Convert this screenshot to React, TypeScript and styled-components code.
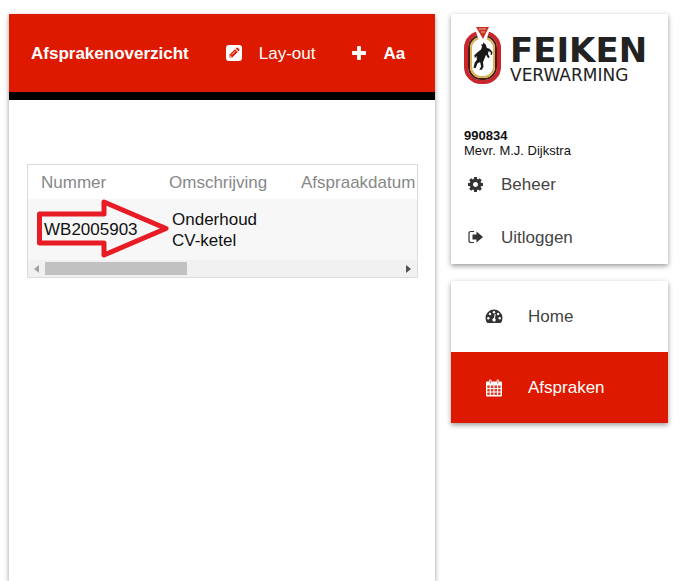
import React, { useRef, useState } from "react";
import styled, { createGlobalStyle, css } from "styled-components";

const RED = "#dd1900";

const GlobalStyle = createGlobalStyle`
  *, *::before, *::after { box-sizing: border-box; }
  body {
    margin: 0;
    background: #fff;
    font-family: "Liberation Sans", Arial, sans-serif;
    font-size: 17px;
    line-height: 21px;
    color: #111;
  }
`;

const Page = styled.div`
  display: grid;
  grid-template-columns: minmax(0, 1fr) 217px;
  gap: 16px;
  min-height: 100vh;
  padding: 14px 12px 0 9px;
`;

const cardShadow = css`
  background: #fff;
  box-shadow: 0 2px 5px rgba(0, 0, 0, 0.4);
`;

const Main = styled.main`
  ${cardShadow}
`;

const Toolbar = styled.header`
  display: flex;
  align-items: center;
  gap: 37px;
  min-height: 86px;
  padding: 0 22px;
  background: ${RED};
  border-bottom: 8px solid #000;
  color: #fff;
`;

const Title = styled.h1`
  margin: 0;
  font-size: 17px;
  line-height: 21px;
`;

const ToolButton = styled.button<{ $strong?: boolean }>`
  display: flex;
  align-items: center;
  gap: 17px;
  padding: 0;
  border: 0;
  background: none;
  color: inherit;
  font: inherit;
  font-weight: ${(p) => (p.$strong ? 700 : 400)};
  white-space: nowrap;
  cursor: pointer;
`;

const TableBox = styled.section`
  position: relative;
  margin: 64px 17px 0 18px;
  border: 1px solid #dcdcdc;
`;

const Scroller = styled.div`
  overflow-x: auto;
  scrollbar-width: none;
`;

const Table = styled.table`
  width: 972px;
  table-layout: fixed;
  border-collapse: collapse;
  text-align: left;
`;

const HeadCell = styled.th<{ $width?: number }>`
  width: ${(p) => (p.$width ? `${p.$width}px` : "auto")};
  height: 34px;
  padding: 0 0 0 13px;
  font-weight: 400;
  color: #888;
`;

const Cell = styled.td`
  height: 61px;
  padding: 0 16px;
  background: #f7f7f7;
`;

const ScrollBar = styled.div`
  display: flex;
  height: 17px;
  background: #f1f1f1;
`;

const ScrollButton = styled.button`
  display: grid;
  place-items: center;
  width: 17px;
  padding: 0;
  border: 0;
  background: none;
  color: #505050;

  &:disabled {
    color: #a3a3a3;
  }
`;

const Track = styled.div`
  flex: 1;
  padding: 2px 0;
`;

const Thumb = styled.div`
  width: 40%;
  height: 13px;
  background: #c1c1c1;
`;

const Pointer = styled.svg`
  position: absolute;
  left: 8px;
  top: 32px;
  pointer-events: none;
`;

const Sidebar = styled.aside`
  display: flex;
  flex-direction: column;
  gap: 17px;
`;

const Card = styled.section`
  ${cardShadow}
`;

const Brand = styled.div`
  display: flex;
  gap: 8px;
  padding: 12px 12px 0 13px;
  margin-bottom: 42px;
  font-family: "DejaVu Sans", sans-serif;
  color: #222;
`;

const BrandText = styled.div`
  display: flex;
  flex-direction: column;
  padding-top: 8px;
`;

const BrandName = styled.strong`
  font-size: 34px;
  line-height: 32px;
`;

const BrandSub = styled.span`
  font-size: 17px;
  line-height: 19px;
`;

const Customer = styled.p`
  display: flex;
  flex-direction: column;
  margin: 0;
  padding: 0 13px;
  font-size: 13px;
  line-height: 15px;
`;

const AccountLink = styled.a`
  display: flex;
  align-items: center;
  gap: 18px;
  height: 53px;
  padding: 0 17px;
  color: #444;
  text-decoration: none;
`;

const NavLink = styled.a<{ $active?: boolean }>`
  display: flex;
  align-items: center;
  gap: 25px;
  height: 71px;
  padding: 0 34px;
  background: ${(p) => (p.$active ? RED : "#fff")};
  color: ${(p) => (p.$active ? "#fff" : "#444")};
  text-decoration: none;
`;

const DarkIcon = styled.svg`
  color: #333;
`;

const EditIcon = () => (
  <svg width="16" height="16" viewBox="0 0 16 16" aria-hidden="true">
    <rect width="16" height="16" rx="3" fill="#fff" />
    <path d="M3.400 12.600V9.800L9 4.200l2.800 2.800-5.600 5.600zM9.700 3.500l.8-.8q.6-.5 1.200 0l1.600 1.600q.5.600 0 1.200l-.8.800z" fill={RED} />
    <path d="M5.600 9.800l3.600-3.600M4.200 10.400v1.400h1.400" stroke="#fff" strokeWidth=".8" fill="none" />
  </svg>
);

const PlusIcon = () => (
  <svg width="14" height="14" viewBox="192 128 1408 1408" aria-hidden="true">
    <path
      fill="currentColor"
      d="M1600 736v192q0 40-28 68t-68 28h-416v416q0 40-28 68t-68 28h-192q-40 0-68-28t-28-68v-416h-416q-40 0-68-28t-28-68v-192q0-40 28-68t68-28h416v-416q0-40 28-68t68-28h192q40 0 68 28t28 68v416h416q40 0 68 28t28 68z"
    />
  </svg>
);

const GearIcon = () => (
  <DarkIcon width="15" height="15" viewBox="128 128 1536 1536" aria-hidden="true">
    <path
      fill="currentColor"
      d="M1152 896q0-106-75-181t-181-75-181 75-75 181 75 181 181 75 181-75 75-181zm512-109v222q0 12-8 23t-20 13l-185 28q-19 54-39 91 35 50 107 138 10 12 10 25t-9 23q-27 37-99 108t-94 71q-12 0-26-9l-138-108q-44 23-91 38-16 136-29 186-7 28-36 28h-222q-14 0-24.500-8.500t-11.500-21.500l-28-184q-49-16-90-37l-141 107q-10 9-25 9-14 0-25-11-126-114-165-168-7-10-7-23 0-12 8-23 15-21 51-66.500t54-70.500q-27-50-41-99l-183-27q-13-2-21-12.500t-8-23.500v-222q0-12 8-23t19-13l186-28q14-46 39-92-40-57-107-138-10-12-10-24 0-10 9-23 26-36 98.500-107.500t94.500-71.500q13 0 26 10l138 107q44-23 91-38 16-136 29-186 7-28 36-28h222q14 0 24.500 8.500t11.500 21.500l28 184q49 16 90 37l142-107q9-9 24-9 13 0 25 10 129 119 165 170 7 8 7 22 0 12-8 23-15 21-51 66.500t-54 70.500q26 50 41 98l183 28q13 2 21 12.500t8 23.500z"
    />
  </DarkIcon>
);

const LogoutIcon = () => (
  <DarkIcon width="15" height="15" viewBox="0 0 15 15" aria-hidden="true">
    <path d="M6 1.500H3Q1 1.500 1 3.500v7q0 2 2 2h3" fill="none" stroke="currentColor" strokeWidth="1.200" />
    <path d="M4.500 4.400h4V1.400L15 7l-6.500 5.600V9.600h-4z" fill="currentColor" />
  </DarkIcon>
);

const DashboardIcon = () => (
  <DarkIcon width="18" height="15" viewBox="0 0 18 15" aria-hidden="true">
    <path d="M2.300 14Q.5 12 .5 9a8.500 8.500 0 0 1 17 0q0 3-1.800 5z" fill="currentColor" />
    <g fill="#fff">
      <circle cx="3.300" cy="9.300" r="1.200" />
      <circle cx="5" cy="5" r="1.200" />
      <circle cx="9" cy="3.200" r="1.200" />
      <circle cx="13.100" cy="5" r="1.200" />
      <circle cx="14.700" cy="9.300" r="1.200" />
      <path d="M9.700 5l1.100.300-.9 3.900q1.200.900.800 2.200-.6 1.500-2.100 1.200-1.500-.5-1.300-2 .3-1.300 1.600-1.500z" />
    </g>
  </DarkIcon>
);

const CalendarIcon = () => (
  <svg width="18" height="18" viewBox="0 0 18 18" aria-hidden="true">
    <path d="M2 2.500h14q1 0 1 1V16.500q0 1-1 1H2q-1 0-1-1V3.500q0-1 1-1z" fill="#fff" />
    <path d="M4 1.500q0-1 1.200-1t1.200 1v4H4zM11.600 1.500q0-1 1.200-1t1.200 1v4h-2.400z" fill="#fff" />
    <path d="M5.200 1.500v3M12.800 1.500v3" stroke={RED} strokeWidth=".8" />
    <g fill={RED} fillOpacity=".85">
      {[6.500, 10, 13.500].map((y) =>
        [2.300, 5.900, 9.500, 13.100].map((x) => <rect key={`${x}-${y}`} x={x} y={y} width="2.500" height="2.500" />),
      )}
    </g>
  </svg>
);

const Emblem = () => (
  <svg width="38" height="60" viewBox="0 0 38 60" role="img" aria-label="Feiken embleem">
    <rect x="2" y="7" width="33" height="49" rx="15" fill="#fff" stroke="#c9252b" strokeWidth="4" />
    <rect x="5" y="10" width="27" height="43" rx="12" fill="#fff" stroke="#4a1a12" strokeWidth="2" />
    <rect x="7" y="12" width="23" height="39" rx="10" fill="#fff" stroke="#d7b45c" strokeWidth="2" />
    <path d="M10 0h17l-5 15h-7z" fill="#fff" />
    <path d="M12 1h13l-6 12z" fill="#c93324" />
    <path d="M15 3h7M17 6h4" stroke="#efb09a" strokeWidth="1" />
    <path
      d="M19 16.500l2.500 1.800 1.500 3.700 2.500.8 3 3.200-.7 3-1.200-.5.300-2-2.300-1.400-.6 3 1.600 2.800-1.400 1.400-2.200-3.600-1.700 4.300-1.300 3.200.5 4.200-1.600 3.400h-2.600l1.800-3.300-1-4.600-2.700 1.700-1.700 4.500H9.500l1.200-5.300 2.200-3.100-.5-3.600-1.500 2.200-.6-3.100 3.200-3 3.600-2.600 1-3.400-1.300-1.500 2.300-.4z"
      fill="#191919"
    />
  </svg>
);

export default function App() {
  const scroller = useRef<HTMLDivElement>(null);
  const [offset, setOffset] = useState(0);

  const onScroll = () => {
    const el = scroller.current;
    if (el) setOffset(el.scrollLeft / Math.max(1, el.scrollWidth - el.clientWidth));
  };
  const scrollBy = (left: number) => scroller.current?.scrollBy({ left, behavior: "smooth" });

  return (
    <>
      <GlobalStyle />
      <Page>
        <Main>
          <Toolbar>
            <Title>Afsprakenoverzicht</Title>
            <ToolButton type="button"><EditIcon />Lay-out</ToolButton>
            <ToolButton type="button" $strong><PlusIcon />Aa</ToolButton>
          </Toolbar>
          <TableBox>
            <Scroller ref={scroller} onScroll={onScroll}>
              <Table>
                <thead>
                  <tr>
                    <HeadCell $width={128}>Nummer</HeadCell>
                    <HeadCell $width={132}>Omschrijving</HeadCell>
                    <HeadCell>Afspraakdatum</HeadCell>
                  </tr>
                </thead>
                <tbody>
                  <tr>
                    <Cell>WB2005903</Cell>
                    <Cell>Onderhoud CV-ketel</Cell>
                    <Cell />
                  </tr>
                </tbody>
              </Table>
            </Scroller>
            <ScrollBar>
              <ScrollButton type="button" aria-label="Naar links" disabled={offset === 0} onClick={() => scrollBy(-80)}>
                <svg width="5" height="8" viewBox="0 0 5 8"><path d="M5 0v8L0 4z" fill="currentColor" /></svg>
              </ScrollButton>
              <Track>
                <Thumb style={{ marginLeft: `${offset * 60}%` }} />
              </Track>
              <ScrollButton type="button" aria-label="Naar rechts" disabled={offset === 1} onClick={() => scrollBy(80)}>
                <svg width="5" height="8" viewBox="0 0 5 8"><path d="M0 0v8l5-4z" fill="currentColor" /></svg>
              </ScrollButton>
            </ScrollBar>
            <Pointer width="138" height="64" viewBox="0 0 138 64" aria-hidden="true">
              <path
                d="M3.500 17H68V5l62 26.500L68 58V46H3.500z"
                fill="none"
                stroke="#e81c24"
                strokeWidth="5"
                strokeLinejoin="round"
              />
            </Pointer>
          </TableBox>
        </Main>
        <Sidebar>
          <Card>
            <Brand>
              <Emblem />
              <BrandText>
                <BrandName>FEIKEN</BrandName>
                <BrandSub>VERWARMING</BrandSub>
              </BrandText>
            </Brand>
            <Customer>
              <strong>990834</strong>
              <span>Mevr. M.J. Dijkstra</span>
            </Customer>
            <AccountLink href="#beheer"><GearIcon />Beheer</AccountLink>
            <AccountLink href="#uitloggen"><LogoutIcon />Uitloggen</AccountLink>
          </Card>
          <Card as="nav">
            <NavLink href="#home"><DashboardIcon />Home</NavLink>
            <NavLink href="#afspraken" $active><CalendarIcon />Afspraken</NavLink>
          </Card>
        </Sidebar>
      </Page>
    </>
  );
}
